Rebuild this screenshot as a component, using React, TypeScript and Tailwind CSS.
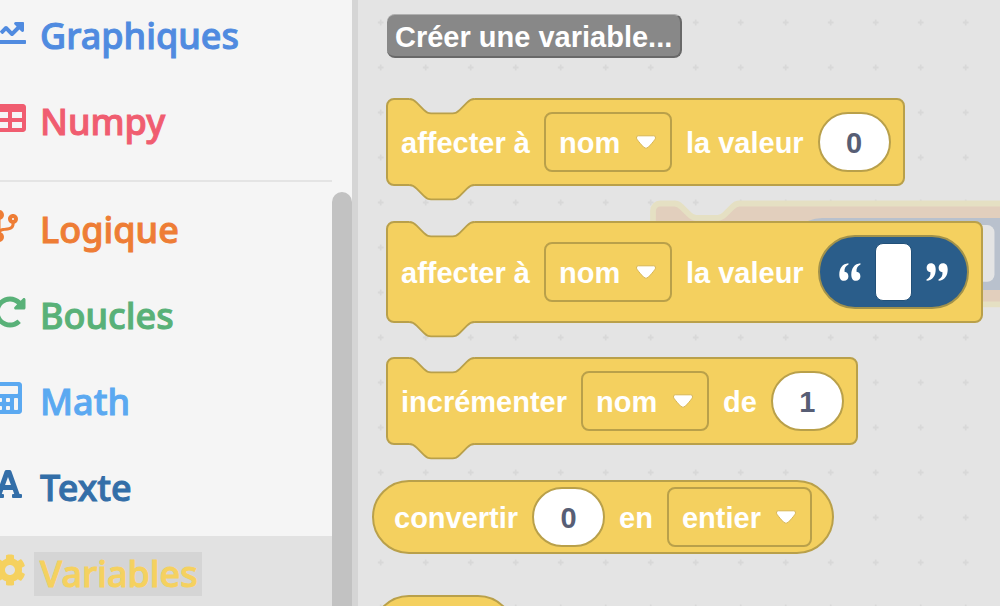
import React from "react";
import {
  FaCalculator,
  FaChartLine,
  FaCodeBranch,
  FaCog,
  FaFont,
  FaRedoAlt,
  FaTable,
} from "react-icons/fa";

type Category = {
  name: string;
  color: string;
  icon: React.ReactNode;
  selected?: boolean;
};

const pinned: Category[] = [
  { name: "Graphiques", color: "text-[#508be0]", icon: <FaChartLine className="h-8 w-8" /> },
  { name: "Numpy", color: "text-[#f05d70]", icon: <FaTable className="h-8 w-8" /> },
];

const categories: Category[] = [
  { name: "Logique", color: "text-[#ee7d35]", icon: <FaCodeBranch className="h-8 w-6" /> },
  { name: "Boucles", color: "text-[#59b178]", icon: <FaRedoAlt className="h-8 w-8" /> },
  { name: "Math", color: "text-[#5ba9f1]", icon: <FaCalculator className="h-8 w-7" /> },
  { name: "Texte", color: "text-[#336ea8]", icon: <FaFont className="h-8 w-7" /> },
  { name: "Variables", color: "text-[#f5d15f]", icon: <FaCog className="h-8 w-8" />, selected: true },
];

function CategoryRow({ name, color, icon, selected }: Category) {
  return (
    <button
      type="button"
      className={`flex h-[86px] w-full shrink-0 items-start pt-4 text-left ${color} ${selected ? "bg-[#e2e2e2]" : ""}`}
    >
      <span className="-ml-1.5 mt-0.5 w-10 shrink-0">{icon}</span>
      <span
        className={`pr-1 pl-1.5 font-['Noto_Sans',sans-serif] text-[36px] leading-[44px] font-medium [-webkit-text-stroke:1px_currentColor] ${selected ? "bg-[#d5d5d5]" : ""}`}
      >
        {name}
      </span>
    </button>
  );
}

function Sidebar() {
  return (
    <nav className="flex w-[358px] shrink-0 flex-col border-r-6 border-[#d5d5d5] bg-[#f5f5f5]">
      <div className="-mt-0.5 mr-5 flex flex-col">
        {pinned.map((c) => (
          <CategoryRow key={c.name} {...c} />
        ))}
      </div>
      <hr className="my-2.5 mr-5 border-t-2 border-[#e4e4e4]" />
      <div className="flex min-h-0 flex-1">
        <div className="flex flex-1 flex-col overflow-hidden">
          {categories.map((c) => (
            <CategoryRow key={c.name} {...c} />
          ))}
        </div>
        <div className="w-5 rounded-t-full bg-[#c2c2c2]" />
      </div>
    </nav>
  );
}

const NOTCH = "c2 0 3 1 4 2l4 4c1 1 2 2 4 2h12c2 0 3 -1 4 -2l4 -4c1 -1 2 -2 4 -2";

function StackBlock({ tall, children }: { tall?: boolean; children: React.ReactNode }) {
  return (
    <div
      className={`relative ml-3.5 flex w-max items-center gap-3.5 rounded-lg border-2 border-[#b9a04a] bg-[#f4d05f] pr-3 pl-[13px] ${tall ? "h-[102px]" : "h-[88px]"}`}
    >
      <svg className="absolute -top-0.5 left-5" width="68" height="18" viewBox="0 0 37.8 10">
        <path d={`M0.8 -0.2V0.55${NOTCH}V-0.2z`} fill="#e4e4e4" />
        <path d={`M0.8 0.55${NOTCH}`} fill="none" stroke="#b9a04a" />
      </svg>
      <svg className="absolute -bottom-[18px] left-5" width="68" height="20" viewBox="0 -1.1 37.8 11.1">
        <path d={`M0.8 -1.1V0.55${NOTCH}V-1.1z`} fill="#f4d05f" />
        <path d={`M0.8 0.55${NOTCH}`} fill="none" stroke="#b9a04a" />
      </svg>
      {children}
    </div>
  );
}

function Label({ children }: { children: React.ReactNode }) {
  return <span className="pt-0.5">{children}</span>;
}

function Dropdown({ label, value }: { label: string; value: string }) {
  return (
    <span className="relative flex items-center">
      <select
        aria-label={label}
        defaultValue={value}
        className="h-15 appearance-none rounded-lg border-2 border-[#b9a04a] bg-transparent pt-0.5 pr-[49px] pl-[13px] font-bold text-white outline-none"
      >
        <option value={value}>{value}</option>
      </select>
      <svg
        className="pointer-events-none absolute right-3.5"
        width="24"
        height="18"
        viewBox="0 0 24 18"
      >
        <path
          d="M4.3 2.8H19.7Q22 2.8 21.5 5.2Q21.200 6.800 14.600 14Q12 16.800 9.400 14Q2.800 6.800 2.500 5.200Q2 2.800 4.300 2.800z"
          fill="#fff"
          stroke="#d8b653"
          strokeWidth="1"
        />
      </svg>
    </span>
  );
}

function NumberField({ label, value }: { label: string; value: string }) {
  return (
    <input
      aria-label={label}
      defaultValue={value}
      className="h-15 w-[73px] rounded-full border-2 border-[#b9a04a] bg-white pt-0.5 text-center font-bold text-[#575e75] outline-none"
    />
  );
}

function Quote({ closing }: { closing?: boolean }) {
  return (
    <svg
      className={closing ? "rotate-180" : ""}
      width="22"
      height="18"
      viewBox="0 0 22 18"
      fill="#fff"
    >
      <path d="M9.400 0.200C3.500 0.800 0.300 5 0.300 11.500C0.300 15.600 2 17.800 5 17.800C7.700 17.800 9.400 16 9.400 13.200C9.400 10.600 7.900 8.900 5.500 8.700C5.300 5 6.600 2.800 9.500 1.500z" />
      <path d="M21.400 0.200C15.500 0.800 12.300 5 12.300 11.500C12.300 15.600 14 17.800 17 17.800C19.700 17.800 21.400 16 21.400 13.200C21.400 10.600 19.900 8.900 17.500 8.700C17.300 5 18.600 2.800 21.500 1.500z" />
    </svg>
  );
}

function TextBlock() {
  return (
    <span className="flex h-[74px] items-center gap-3.5 rounded-full border-2 border-[#a2924b] bg-[#2a5d8a] px-[19px]">
      <Quote />
      <input
        aria-label="Texte"
        className="h-[58px] w-[37px] rounded-lg border border-[#225078] bg-white text-center text-[#575e75] outline-none"
      />
      <Quote closing />
    </span>
  );
}

function Workspace() {
  return (
    <svg className="absolute inset-0 h-full w-full" aria-hidden="true">
      <defs>
        <pattern id="grid" x="0" y="0" width="45" height="45" patternUnits="userSpaceOnUse">
          <path d="M19.800 22.500h5.800M22.700 19.600v5.800" stroke="#d8d8d8" strokeWidth="1.800" />
        </pattern>
      </defs>
      <rect width="100%" height="100%" fill="url(#grid)" />
      <g transform="translate(295 203.500) scale(1.800)">
        <path
          d={`M0 4a4 4 0 0 1 4 -4h8${NOTCH}H240V56H4a4 4 0 0 1 -4 -4z`}
          fill="#e2cfbd"
          stroke="#e5e0c3"
          strokeWidth="3.200"
        />
        <path d="M240 8H94a20 20 0 0 0 0 40H240z" fill="#b9c1cd" />
        <rect x="165" y="12" width="24.700" height="31.500" rx="4" fill="#e4e4e4" />
      </g>
    </svg>
  );
}

function Flyout() {
  return (
    <main className="relative min-w-0 flex-1 overflow-hidden bg-[#e4e4e4]">
      <Workspace />
      <div className="relative flex flex-col items-start pt-3.5 pl-3.5 font-['Liberation_Sans',Arial,sans-serif] text-[29px] leading-[36px] font-bold whitespace-nowrap text-white">
        <button
          type="button"
          className="mb-10 ml-[15px] flex h-11 items-center rounded-lg border-t border-r-2 border-b-2 border-t-[#b0b0b0] border-r-[#686868] border-b-[#686868] bg-[#888] px-2"
        >
          <Label>Créer une variable...</Label>
        </button>
        <div className="mb-[35px]">
          <StackBlock>
            <Label>affecter à</Label>
            <Dropdown label="Variable" value="nom" />
            <Label>la valeur</Label>
            <NumberField label="Valeur" value="0" />
          </StackBlock>
        </div>
        <div className="mb-[34px]">
          <StackBlock tall>
            <Label>affecter à</Label>
            <Dropdown label="Variable" value="nom" />
            <Label>la valeur</Label>
            <TextBlock />
          </StackBlock>
        </div>
        <div className="mb-[35px]">
          <StackBlock>
            <Label>incrémenter</Label>
            <Dropdown label="Variable" value="nom" />
            <Label>de</Label>
            <NumberField label="Incrément" value="1" />
          </StackBlock>
        </div>
        <div className="mb-[41px] flex h-[74px] items-center gap-3.5 rounded-full border-2 border-[#b9a04a] bg-[#f4d05f] px-5">
          <Label>convertir</Label>
          <NumberField label="Nombre" value="0" />
          <Label>en</Label>
          <Dropdown label="Type" value="entier" />
        </div>
        <div className="h-[74px] w-[143px] rounded-full border-2 border-[#b9a04a] bg-[#f4d05f]" />
      </div>
    </main>
  );
}

export default function App() {
  return (
    <div className="flex h-screen overflow-hidden">
      <Sidebar />
      <Flyout />
    </div>
  );
}
